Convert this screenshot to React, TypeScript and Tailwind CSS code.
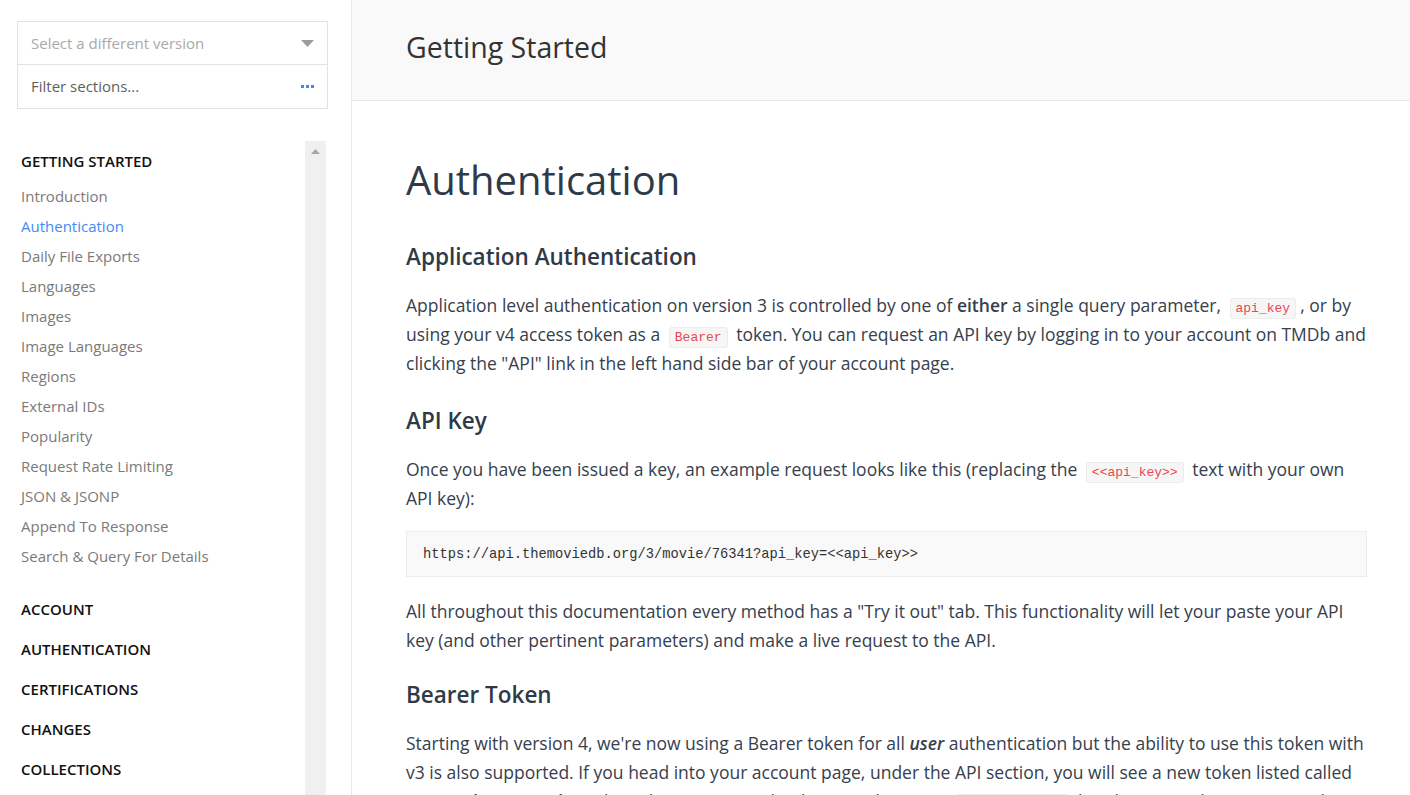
const sections = [
  'Introduction',
  'Authentication',
  'Daily File Exports',
  'Languages',
  'Images',
  'Image Languages',
  'Regions',
  'External IDs',
  'Popularity',
  'Request Rate Limiting',
  'JSON & JSONP',
  'Append To Response',
  'Search & Query For Details',
];

const groups = ['ACCOUNT', 'AUTHENTICATION', 'CERTIFICATIONS', 'CHANGES', 'COLLECTIONS', 'COMPANIES'];

function Code({ children }: { children: React.ReactNode }) {
  return (
    <code className="mx-[4px] rounded-[3px] border border-[#ececec] bg-[#f6f6f6] px-[5px] py-[2px] font-['Liberation_Mono',monospace] text-[13px] leading-none text-[#e9464f]">
      {children}
    </code>
  );
}

function Sidebar() {
  return (
    <aside className="flex h-full w-[352px] shrink-0 flex-col border-r border-[#e8e8e8] bg-white">
      <div className="pl-[17px] pr-[23px] pt-[21px]">
        <div className="flex h-[44px] items-center justify-between border border-[#e2e2e2] pl-[13px] pr-[13px]">
          <span className="text-[15px] text-[#a9a9a9]">Select a different version</span>
          <svg width="13" height="7" viewBox="0 0 13 7">
            <path d="M0 0h13L6.5 7z" fill="#9c9c9c" />
          </svg>
        </div>
        <div className="flex h-[44px] items-center justify-between border border-t-0 border-[#e2e2e2] pl-[13px] pr-[13px]">
          <span className="text-[15px] text-[#5f5f5f]">Filter sections...</span>
          <span className="flex gap-[2px]">
            <span className="h-[3px] w-[3px] bg-[#3d8cf5]" />
            <span className="h-[3px] w-[3px] bg-[#3d8cf5]" />
            <span className="h-[3px] w-[3px] bg-[#3d8cf5]" />
          </span>
        </div>
      </div>

      <div className="mt-[32px] flex min-h-0 flex-1">
        <nav className="flex-1 overflow-hidden pl-[21px]">
          <div className="h-10 text-[15px] font-semibold leading-10 text-[#111]">GETTING STARTED</div>
          <ul className="mb-[18px]">
            {sections.map((s) => (
              <li
                key={s}
                className={`h-[30px] text-[15px] leading-[30px] ${s === 'Authentication' ? 'text-[#3f8cf3]' : 'text-[#7a7a7a]'}`}
              >
                {s}
              </li>
            ))}
          </ul>
          {groups.map((g) => (
            <div key={g} className="h-10 text-[15px] font-semibold leading-10 text-[#111]">
              {g}
            </div>
          ))}
        </nav>
        <div className="mr-[25px] flex w-[21px] justify-center bg-[#f0f0f0] pt-[8px]">
          <svg width="9" height="5" viewBox="0 0 9 5">
            <path d="M4.5 0L9 5H0z" fill="#a6a6a6" />
          </svg>
        </div>
      </div>
    </aside>
  );
}

export default function App() {
  return (
    <div className="flex h-[795px] w-full overflow-hidden bg-white font-['Open_Sans',sans-serif]">
      <Sidebar />
      <main className="min-w-0 flex-1 overflow-hidden">
        <header className="flex h-[101px] items-center border-b border-[#e9e9e9] bg-[#f9f9f9] pl-[54px]">
          <h1 className="pb-[5px] text-[28.5px] font-normal text-[#333]">Getting Started</h1>
        </header>

        <article className="mr-[43px] pl-[54px] text-[17.5px] leading-[29px] text-[#36404d]">
          <h1 className="mt-[54px] text-[40px] font-normal leading-[50px] text-[#2f3a48]">Authentication</h1>

          <h2 className="mt-[36px] text-[22.5px] font-semibold leading-[32px] text-[#2f3a48]">Application Authentication</h2>
          <p className="mt-[17.5px]">
            Application level authentication on version 3 is controlled by one of <strong className="font-semibold">either</strong> a
            single query parameter, <Code>api_key</Code>, or by using your v4 access token as a <Code>Bearer</Code> token. You can
            request an API key by logging in to your account on TMDb and clicking the "API" link in the left hand side bar of your
            account page.
          </p>

          <h2 className="mt-[27.5px] text-[22.5px] font-semibold leading-[32px] text-[#2f3a48]">API Key</h2>
          <p className="mt-[17.5px]">
            Once you have been issued a key, an example request looks like this (replacing the <Code>{'<<api_key>>'}</Code> text with
            your own API key):
          </p>
          <pre className="mt-[18.5px] flex h-[46px] items-center border border-[#ececec] bg-[#f9f9f9] px-[16px] font-['Liberation_Mono',monospace] text-[13.75px] text-[#333]">
            {'https://api.themoviedb.org/3/movie/76341?api_key=<<api_key>>'}
          </pre>
          <p className="mt-[19.5px]">
            All throughout this documentation every method has a "Try it out" tab. This functionality will let your paste your API
            key (and other pertinent parameters) and make a live request to the API.
          </p>

          <h2 className="mt-[24.5px] text-[22.5px] font-semibold leading-[32px] text-[#2f3a48]">Bearer Token</h2>
          <p className="mt-[17.5px]">
            Starting with version 4, we're now using a Bearer token for all <em className="font-semibold">user</em> authentication
            but the ability to use this token with v3 is also supported. If you head into your account page, under the API section,
            you will see a new token listed called <em className="font-semibold">API Read Access Token</em>. This token is expected
            to be sent along as a <Code>Authorization</Code> header. A simple cURL example would look like this:
          </p>
        </article>
      </main>
    </div>
  );
}
